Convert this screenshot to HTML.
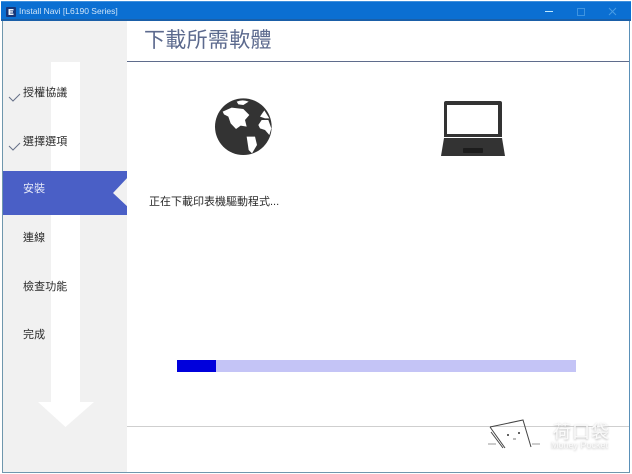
<!DOCTYPE html>
<html lang="zh-Hant">
<head>
<meta charset="utf-8">
<style>
html,body{margin:0;padding:0;width:632px;height:474px;overflow:hidden;background:#fff}
body{position:relative;font-family:"Liberation Sans","Noto Sans CJK TC",sans-serif}
.a{position:absolute}
.t{position:absolute;white-space:nowrap;line-height:14px;font-size:11px;color:#2a2a2a;letter-spacing:.1px;filter:blur(.25px)}
</style>
</head>
<body>
<div class="a" style="left:1px;top:1px;width:630px;height:20px;background:#0b6fd2"></div>
<div class="a" style="left:1px;top:1px;width:630px;height:1px;background:#3f8fdc"></div>
<div class="a" style="left:1px;top:19px;width:630px;height:2px;background:#1a5fa8"></div>
<div class="a" style="left:2px;top:21px;width:1px;height:452px;background:#6f97ad"></div>
<div class="a" style="left:629px;top:21px;width:1px;height:452px;background:#5a90b8"></div>
<div class="a" style="left:2px;top:472px;width:628px;height:1px;background:#6f97ad"></div>

<svg class="a" style="left:6px;top:7px" width="10" height="10" viewBox="0 0 10 10">
<rect width="10" height="10" rx="1" fill="#16367a"/>
<path d="M2.500 2H7.500V3.500H4.200V4.300H7V5.600H4.200V6.500H7.500V8H2.500Z" fill="#eef4fb"/>
</svg>
<div class="t" style="left:19px;top:4px;font-size:8.500px;color:#cfe4f8;letter-spacing:0">Install Navi [L6190 Series]</div>

<div class="a" style="left:545px;top:11px;width:8px;height:1px;background:#bfeaff"></div>
<div class="a" style="left:577px;top:8px;width:6px;height:6px;border:1px solid #3f94e0"></div>
<svg class="a" style="left:608px;top:7px" width="9" height="9"><path d="M1 1L8 8M8 1L1 8" stroke="#4a9ce4" stroke-width="1"/></svg>

<div class="a" style="left:3px;top:21px;width:124px;height:451px;background:#f1f1f1"></div>
<svg class="a" style="left:3px;top:21px" width="124" height="420"><path d="M48 41H77V381H91L62.500 406L35 381H48Z" fill="#fff"/></svg>

<svg class="a" style="left:3px;top:171px" width="124" height="44"><path d="M0 0H125V6L110 22L125 36V44H0Z" fill="#4a5fc6"/></svg>

<svg class="a" style="left:8px;top:90px" width="14" height="13"><path d="M1 7L5 11L12 4" fill="none" stroke="#667088" stroke-width="1"/></svg>
<svg class="a" style="left:8px;top:139px" width="14" height="13"><path d="M1 7L5 11L12 4" fill="none" stroke="#667088" stroke-width="1"/></svg>
<div class="t" style="left:23px;top:86px">授權協議</div>
<div class="t" style="left:23px;top:135px">選擇選項</div>
<div class="t" style="left:23px;top:182px;color:#e4e8f8">安裝</div>
<div class="t" style="left:23px;top:231px">連線</div>
<div class="t" style="left:23px;top:280px">檢查功能</div>
<div class="t" style="left:23px;top:328px">完成</div>

<div class="t" style="left:144px;top:28px;font-size:21px;line-height:26px;color:#5c6a8e;letter-spacing:.3px">下載所需軟體</div>
<div class="a" style="left:127px;top:61px;width:502px;height:1px;background:#5f6c8c"></div>

<svg class="a" style="left:200px;top:85px" width="90" height="80" viewBox="0 0 270 240">
<circle cx="130" cy="125" r="85" fill="#333"/>
<path d="M68 80L95 68L130 72L148 90L135 105L140 125L122 122L108 132L92 115L85 95L72 88Z" fill="#fff"/>
<path d="M140 155L165 155L171 180L156 205L146 195Z" fill="#fff"/>
<path d="M110 50Q128 42 146 50L130 60L115 58Z" fill="#fff"/>
<path d="M180 95L193 76L208 100L195 100Z" fill="#fff"/>
<path d="M175 120L185 105L205 105L214 130L208 150L195 135L180 130Z" fill="#fff"/>
</svg>

<svg class="a" style="left:441px;top:100px" width="64" height="58" viewBox="0 0 64 58">
<path d="M3 3Q3 1 5 1H59Q61 1 61 3V37H3Z" fill="#333"/>
<rect x="6" y="5" width="51" height="29" fill="#fff"/>
<path d="M3 38H61L64 56H0Z" fill="#333"/>
<rect x="22" y="48" width="20" height="5" rx="1" fill="#1c1c1c"/>
</svg>

<div class="t" style="left:149px;top:195px;letter-spacing:0">正在下載印表機驅動程式...</div>

<div class="a" style="left:177px;top:360px;width:399px;height:12px;background:#c4c4f6"></div>
<div class="a" style="left:177px;top:360px;width:39px;height:12px;background:#0000dc"></div>

<div class="a" style="left:127px;top:426px;width:502px;height:1px;background:#cfcfcf"></div>

<svg class="a" style="left:488px;top:418px" width="62" height="36" viewBox="0 0 62 36">
<ellipse cx="28" cy="27" rx="30" ry="5" fill="#fff"/>
<path d="M2 9L35 2L43 29" fill="none" stroke="#444" stroke-width="1"/>
<path d="M2 9L17 30M3 14L15 30" fill="none" stroke="#444" stroke-width="1"/>
<path d="M0 26H8M44 26H52" stroke="#999" stroke-width="1"/>
<circle cx="20" cy="17" r="1" fill="#333"/><circle cx="31" cy="15" r="1" fill="#333"/>
<path d="M25 21h3" stroke="#777"/>
</svg>
<div class="t" style="left:553px;top:422px;font-size:18px;line-height:20px;color:#fafafa;letter-spacing:1px;text-shadow:0 1px 2px #b4b4b4">荷口袋</div>
<div class="t" style="left:551px;top:440px;font-size:9px;line-height:11px;color:#fafafa;letter-spacing:0;text-shadow:0 1px 2px #b4b4b4">Money Pocket</div>
</body>
</html>
